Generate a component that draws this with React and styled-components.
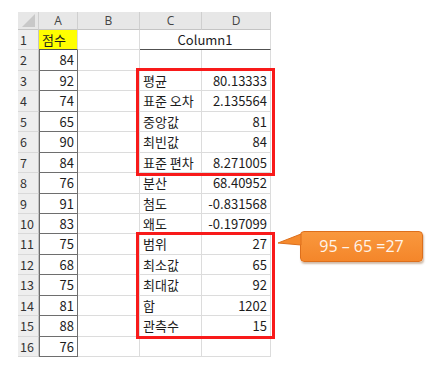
import React from "react";
import styled, { createGlobalStyle, css } from "styled-components";

const Global = createGlobalStyle`
  html, body { margin: 0; padding: 0; background: #fff; }
  body { font-family: "Noto Sans CJK KR", "Noto Sans", sans-serif; }
`;

const Page = styled.div`
  width: 443px;
  height: 365px;
  overflow: hidden;
  padding: 12px 0 0 18px;
  box-sizing: border-box;
`;

const Sheet = styled.div`
  position: relative;
  display: grid;
  grid-template-columns: 21px 39px 62px 62px 69px;
  grid-template-rows: 18px repeat(16, 20.45px);
  width: max-content;
  font-size: 13px;
  color: #1c1c1c;
`;

const Cell = styled.div`
  box-sizing: border-box;
  border-right: 1px solid #dcdcdc;
  border-bottom: 1px solid #dcdcdc;
  padding: 0 3px;
  line-height: 19px;
  white-space: nowrap;
  overflow: visible;
  text-align: ${(p) => p.$align || "left"};
  ${(p) => p.$span && css`grid-column: span ${p.$span};`}
  ${(p) => p.$bg && css`background: ${p.$bg};`}
  ${(p) => p.$boxed && css`
    border-right-color: #6e6e6e;
    border-bottom-color: #6e6e6e;
    box-shadow: inset 1px 0 0 #6e6e6e;
  `}
  ${(p) => p.$underline && css`border-bottom-color: #505050;`}
`;

const ColHead = styled.div`
  box-sizing: border-box;
  background: #e7e7e7;
  border-right: 1px solid #cfcfcf;
  border-bottom: 1px solid #c4c4c4;
  color: #444;
  font-size: 12px;
  line-height: 17px;
  text-align: center;
  font-family: "Open Sans", "Noto Sans", sans-serif;
`;

const Corner = styled(ColHead)`
  position: relative;
  &::after {
    content: "";
    position: absolute;
    right: 3px;
    bottom: 2px;
    width: 0;
    height: 0;
    border-left: 13px solid transparent;
    border-bottom: 13px solid #c8c8c8;
  }
`;

const RowHead = styled.div`
  box-sizing: border-box;
  background: #eeeeee;
  border-right: 1px solid #c4c4c4;
  border-bottom: 1px solid #d9d9d9;
  color: #333;
  font-size: 12.5px;
  line-height: 19px;
  padding-left: 2px;
`;

const RedBox = styled.div`
  position: absolute;
  box-sizing: border-box;
  border: 3px solid #f81a1a;
  left: ${(p) => p.$left}px;
  top: ${(p) => p.$top}px;
  width: ${(p) => p.$width}px;
  height: ${(p) => p.$height}px;
  pointer-events: none;
`;

const Callout = styled.div`
  position: absolute;
  left: 282px;
  top: 219px;
  width: 123px;
  height: 31px;
  box-sizing: border-box;
  background: linear-gradient(#f9983e, #f4862a);
  border: 1px solid #dd6f1c;
  border-radius: 4px;
  box-shadow: 1px 2px 2px rgba(120, 60, 10, 0.35);
  color: #fff4ea;
  font-family: "Open Sans", "Noto Sans", sans-serif;
  font-size: 16px;
  line-height: 29px;
  text-align: center;
`;

const Tail = styled.svg`
  position: absolute;
  left: -24px;
  top: 1px;
  overflow: visible;
`;

const aVals = [84, 92, 74, 65, 90, 84, 76, 91, 83, 75, 68, 75, 81, 88, 76];
const stats = {
  3: ["평균", "80.13333"],
  4: ["표준 오차", "2.135564"],
  5: ["중앙값", "81"],
  6: ["최빈값", "84"],
  7: ["표준 편차", "8.271005"],
  8: ["분산", "68.40952"],
  9: ["첨도", "-0.831568"],
  10: ["왜도", "-0.197099"],
  11: ["범위", "27"],
  12: ["최소값", "65"],
  13: ["최대값", "92"],
  14: ["합", "1202"],
  15: ["관측수", "15"],
};

export default function App() {
  const rows = [];
  for (let r = 1; r <= 16; r++) {
    rows.push(<RowHead key={`h${r}`}>{r}</RowHead>);
    if (r === 1) {
      rows.push(
        <Cell key="a1" $bg="#ffff00" $underline>
          점수
        </Cell>
      );
      rows.push(<Cell key="b1" />);
      rows.push(
        <Cell key="cd1" $span={2} $align="center" $underline>
          Column1
        </Cell>
      );
    } else {
      rows.push(
        <Cell key={`a${r}`} $align="right" $boxed>
          {aVals[r - 2]}
        </Cell>
      );
      rows.push(<Cell key={`b${r}`} />);
      const s = stats[r];
      rows.push(<Cell key={`c${r}`}>{s ? s[0] : ""}</Cell>);
      rows.push(
        <Cell key={`d${r}`} $align="right">
          {s ? s[1] : ""}
        </Cell>
      );
    }
  }

  return (
    <Page>
      <Global />
      <Sheet>
        <Corner />
        <ColHead>A</ColHead>
        <ColHead>B</ColHead>
        <ColHead>C</ColHead>
        <ColHead>D</ColHead>
        {rows}
        <RedBox $left={118} $top={56} $width={139} $height={108} />
        <RedBox $left={118} $top={220} $width={139} $height={107} />
        <Callout>
          <Tail width="24" height="12">
            <polygon points="24,1 1,10 24,12" fill="#f58a2d" stroke="#dd6f1c" strokeWidth="1" />
          </Tail>
          95 – 65 =27
        </Callout>
      </Sheet>
    </Page>
  );
}
